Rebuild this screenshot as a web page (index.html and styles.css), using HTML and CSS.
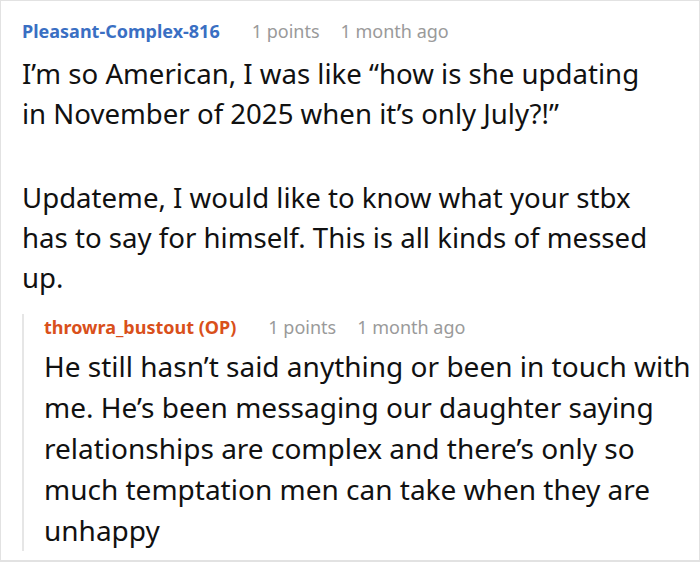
FILE: index.html
```html
<!DOCTYPE html>
<html lang="en">
<head>
  <meta charset="UTF-8">
  <meta name="viewport" content="width=device-width, initial-scale=1.0">
  <title>Comments</title>
  <link rel="stylesheet" href="styles.css">
</head>
<body>
  <div class="thread">
    <div class="comment">
      <div class="meta">
        <span class="author">Pleasant-Complex-816</span>
        <span class="info">1 points</span>
        <span class="info">1 month ago</span>
      </div>
      <div class="text">
        <p>I’m so American, I was like “how is she updating in November of 2025 when it’s only July?!”</p>
        <p>Updateme, I would like to know what your stbx has to say for himself. This is all kinds of messed up.</p>
      </div>

      <div class="reply">
        <div class="meta">
          <span class="author op">throwra_bustout (OP)</span>
          <span class="info">1 points</span>
          <span class="info">1 month ago</span>
        </div>
        <div class="text">
          <p>He still hasn’t said anything or been in touch with me. He’s been messaging our daughter saying relationships are complex and there’s only so much temptation men can take when they are unhappy</p>
        </div>
      </div>
    </div>
  </div>
</body>
</html>
```

FILE: styles.css
```css
body, html {
  margin: 0;
  padding: 0;
  background: #fff;
}
.thread {
  width: 700px;
  height: 562px;
  border: 1px solid #e2e2e2;
  border-bottom-width: 2px;
  box-sizing: border-box;
  font-family: "Noto Sans", "Open Sans", sans-serif;
  color: #111;
}
.comment {
  padding: 17px 30px 0 21px;
}
.meta {
  display: flex;
  height: 26px;
  align-items: center;
  font-size: 18px;
}
.author {
  font-weight: bold;
  color: #3a6fc3;
  margin-right: 32px;
}
.author.op {
  color: #d9501b;
}
.info {
  color: #9a9a9a;
  margin-right: 21px;
}
.text {
  margin-top: 9px;
  font-size: 27.6px;
  line-height: 40px;
}
.text p {
  margin: 0 0 44px;
}
.text p:last-child {
  margin-bottom: 0;
}
.reply {
  margin: 17px -30px 0 0;
  border-left: 2px solid #e6e6e6;
  padding-left: 20px;
}
.reply .text {
  margin-top: 6px;
  margin-bottom: -8px;
  font-size: 28px;
  line-height: 41px;
}
```
